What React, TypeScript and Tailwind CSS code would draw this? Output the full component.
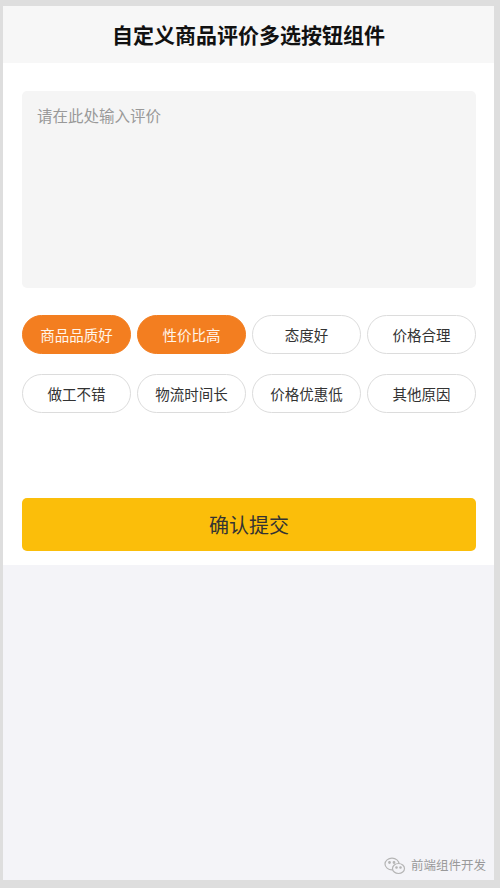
import React, { useState } from "react";

const TAGS = ["商品品质好", "性价比高", "态度好", "价格合理", "做工不错", "物流时间长", "价格优惠低", "其他原因"];

export default function App() {
  const [sel, setSel] = useState<number[]>([0, 1]);
  const toggle = (i: number) =>
    setSel((s) => (s.includes(i) ? s.filter((x) => x !== i) : [...s, i]));
  return (
    <div
      className="w-[500px] h-[888px] bg-[#dedede] pt-[6px] pl-[3px] pr-[6px] pb-[8px] flex"
      style={{ fontFamily: '"Noto Sans CJK SC", "Noto Sans", sans-serif' }}
    >
      <div className="flex-1 flex flex-col bg-[#f4f4f8]">
        <div className="h-[57px] bg-[#f7f7f7] flex items-center justify-center">
          <span className="text-[21px] font-bold text-[#111] tracking-[0px]">自定义商品评价多选按钮组件</span>
        </div>
        <div className="bg-white pt-[28px] pl-[19px] pr-[18px] pb-[14px]">
          <textarea
            placeholder="请在此处输入评价"
            className="block w-full h-[197px] bg-[#f5f5f5] rounded-[5px] resize-none outline-none px-[15px] py-[13px] text-[15.5px] leading-[22px] text-[#333] placeholder:text-[#999]"
          />
          <div className="mt-[27px] grid grid-cols-4 gap-x-[6px] gap-y-[20px]">
            {TAGS.map((t, i) => {
              const on = sel.includes(i);
              return (
                <button
                  key={t}
                  onClick={() => toggle(i)}
                  className={
                    on
                      ? "h-[39px] rounded-full bg-[#f37e20] border border-[#f37e20] text-[#fff5ea] text-[14.5px] flex items-center justify-center"
                      : "h-[39px] rounded-full bg-white border border-[#dcdcdc] text-[#333] text-[14.5px] flex items-center justify-center"
                  }
                >
                  {t}
                </button>
              );
            })}
          </div>
          <button className="mt-[85px] w-full h-[53px] rounded-[5px] bg-[#fbbe0a] text-[#333] text-[20px] flex items-center justify-center">
            确认提交
          </button>
        </div>
        <div className="flex-1 flex flex-col justify-end items-end pb-[5px] pr-[8px]">
          <div className="flex items-center gap-[5px] text-[#9a9a9a]">
            <svg width="22" height="18" viewBox="0 0 22 18" fill="none" stroke="#b5b5b5" strokeWidth="1.2">
              <ellipse cx="8" cy="7" rx="7" ry="5.8" />
              <ellipse cx="14.5" cy="11.5" rx="6" ry="5" fill="#f4f4f8" />
              <circle cx="5.5" cy="5.5" r="0.8" fill="#b5b5b5" />
              <circle cx="10" cy="5.5" r="0.8" fill="#b5b5b5" />
              <circle cx="12.5" cy="10.5" r="0.7" fill="#b5b5b5" />
              <circle cx="16.5" cy="10.5" r="0.7" fill="#b5b5b5" />
            </svg>
            <span className="text-[12.5px]">前端组件开发</span>
          </div>
        </div>
      </div>
    </div>
  );
}
